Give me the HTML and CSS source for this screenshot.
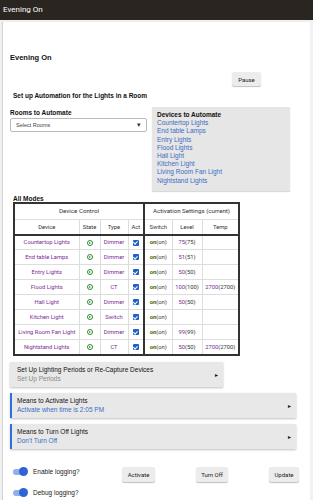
FILE: index.html
```html
<!DOCTYPE html>
<html>
<head>
<meta charset="utf-8">
<title>Evening On</title>
<link rel="stylesheet" href="styles.css">
</head>
<body>
<header class="topbar">Evening On</header>
<div class="page">
  <main class="card">
    <h1 class="title">Evening On</h1>
    <div class="pause-row"><button class="btn">Pause</button></div>
    <h2 class="section">Set up Automation for the Lights in a Room</h2>
    <div class="rooms-row">
      <div class="rooms">
        <div class="label">Rooms to Automate</div>
        <div class="select"><span>Select Rooms</span><span class="caret">&#9662;</span></div>
      </div>
      <div class="devices">
        <div class="label">Devices to Automate</div>
        <div class="dev">Countertop Lights</div>
        <div class="dev">End table Lamps</div>
        <div class="dev">Entry Lights</div>
        <div class="dev">Flood Lights</div>
        <div class="dev">Hall Light</div>
        <div class="dev">Kitchen Light</div>
        <div class="dev">Living Room Fan Light</div>
        <div class="dev">Nightstand Lights</div>
      </div>
    </div>
    <div class="modes-label">All Modes</div>
    <table class="grid">
      <colgroup>
        <col class="c-dev"><col class="c-state"><col class="c-type"><col class="c-act">
        <col class="c-sw"><col class="c-lvl"><col class="c-tmp">
      </colgroup>
      <thead>
        <tr class="h1">
          <th colspan="4" class="sep">Device Control</th>
          <th colspan="3">Activation Settings (current)</th>
        </tr>
        <tr class="h2">
          <th>Device</th><th>State</th><th>Type</th><th class="sep">Act</th>
          <th>Switch</th><th>Level</th><th>Temp</th>
        </tr>
      </thead>
      <tbody>
        <tr><td class="p">Countertop Lights</td><td><span class="st"></span></td><td class="p">Dimmer</td><td class="sep"><span class="cb"></span></td><td><b class="on">on</b>(on)</td><td><span class="p">75</span>(75)</td><td></td></tr>
        <tr><td class="p">End table Lamps</td><td><span class="st"></span></td><td class="p">Dimmer</td><td class="sep"><span class="cb"></span></td><td><b class="on">on</b>(on)</td><td><span class="p">51</span>(51)</td><td></td></tr>
        <tr><td class="p">Entry Lights</td><td><span class="st"></span></td><td class="p">Dimmer</td><td class="sep"><span class="cb"></span></td><td><b class="on">on</b>(on)</td><td><span class="p">50</span>(50)</td><td></td></tr>
        <tr><td class="p">Flood Lights</td><td><span class="st"></span></td><td class="p">CT</td><td class="sep"><span class="cb"></span></td><td><b class="on">on</b>(on)</td><td><span class="p">100</span>(100)</td><td><span class="p">2700</span>(2700)</td></tr>
        <tr><td class="p">Hall Light</td><td><span class="st"></span></td><td class="p">Dimmer</td><td class="sep"><span class="cb"></span></td><td><b class="on">on</b>(on)</td><td><span class="p">50</span>(50)</td><td></td></tr>
        <tr><td class="p">Kitchen Light</td><td><span class="st"></span></td><td class="p">Switch</td><td class="sep"><span class="cb"></span></td><td><b class="on">on</b>(on)</td><td></td><td></td></tr>
        <tr><td class="p">Living Room Fan Light</td><td><span class="st"></span></td><td class="p">Dimmer</td><td class="sep"><span class="cb"></span></td><td><b class="on">on</b>(on)</td><td><span class="p">99</span>(99)</td><td></td></tr>
        <tr><td class="p">Nightstand Lights</td><td><span class="st"></span></td><td class="p">CT</td><td class="sep"><span class="cb"></span></td><td><b class="on">on</b>(on)</td><td><span class="p">50</span>(50)</td><td><span class="p">2700</span>(2700)</td></tr>
      </tbody>
    </table>

    <div class="nav narrow">
      <div class="nav-text"><div class="nav-title">Set Up Lighting Periods or Re-Capture Devices</div><div class="nav-sub gray">Set Up Periods</div></div>
      <span class="arrow">&#9656;</span>
    </div>
    <div class="nav wide blue">
      <div class="nav-text"><div class="nav-title">Means to Activate Lights</div><div class="nav-sub link">Activate when time is 2:05 PM</div></div>
      <span class="arrow">&#9656;</span>
    </div>
    <div class="nav wide blue">
      <div class="nav-text"><div class="nav-title">Means to Turn Off Lights</div><div class="nav-sub link">Don't Turn Off</div></div>
      <span class="arrow">&#9656;</span>
    </div>

    <div class="footer">
      <div class="toggles">
        <div class="tg-row"><span class="toggle"></span><span>Enable logging?</span></div>
        <div class="tg-row"><span class="toggle"></span><span>Debug logging?</span></div>
      </div>
      <div class="btns">
        <button class="btn">Activate</button>
        <button class="btn">Turn Off</button>
        <button class="btn">Update</button>
      </div>
    </div>
  </main>
</div>
</body>
</html>
```

FILE: styles.css
```css
* { box-sizing: border-box; }
html, body { margin: 0; padding: 0; }
body {
  font-family: "Liberation Sans", Arial, sans-serif;
  background: #f2f2f2;
  color: #111;
  width: 313px;
  height: 500px;
  overflow: hidden;
}
.topbar {
  height: 20px;
  background: #2a2521;
  color: #fff;
  font-family: Roboto, sans-serif;
  font-size: 8px;
  line-height: 19px;
  padding-left: 3px;
}
.page {
  padding: 2px 3px 0 3px;
}
.card {
  background: #fff;
  box-shadow: -1px 0 1px rgba(0,0,0,0.12);
  padding: 31px 0 0 7px;
  height: 500px;
}
.title {
  margin: 0;
  font-size: 7.5px;
  line-height: 10px;
  font-weight: bold;
}
.pause-row {
  display: flex;
  padding: 9px 0 0 222px;
}
.btn {
  font-family: Roboto, sans-serif;
  font-size: 6px;
  color: #222;
  background: #ececec;
  border: none;
  border-radius: 2px;
  box-shadow: 0 1px 1px rgba(0,0,0,0.25);
  height: 14px;
  padding: 0 2px;
  margin: 0;
  white-space: nowrap;
}
.pause-row .btn { width: 29px; }
.section {
  margin: 5px 0 0 3px;
  font-size: 6.5px;
  line-height: 10px;
  font-weight: bold;
}
.rooms-row {
  display: flex;
  align-items: flex-start;
  margin-top: 6px;
  gap: 5px;
}
.rooms {
  width: 137px;
  padding-top: 2px;
}
.label {
  font-size: 6.5px;
  font-weight: bold;
  line-height: 8px;
}
.select {
  margin-top: 1px;
  height: 14px;
  border: 1px solid #bbb;
  border-radius: 2px;
  display: flex;
  align-items: center;
  justify-content: space-between;
  padding: 0 5px 0 5px;
  font-size: 5.5px;
  color: #444;
}
.caret { font-size: 7px; color: #333; }
.devices {
  width: 138px;
  background: #e6e6e6;
  padding: 4px 5px 6px 5px;
  box-shadow: 0 1px 1px rgba(0,0,0,0.15);
}
.devices .label { line-height: 8.2px; }
.dev {
  font-size: 6.5px;
  line-height: 8.2px;
  color: #3b6cc4;
}
.modes-label {
  margin: 4px 0 0 3px;
  font-size: 6.5px;
  font-weight: bold;
  line-height: 7px;
}
.grid {
  margin: 0 0 0 3px;
  border-collapse: collapse;
  border: 2px solid #333;
  font-family: Roboto, sans-serif;
  font-size: 5.8px;
  line-height: 7px;
  color: #333;
  table-layout: fixed;
  width: 225px;
}
.c-dev { width: 65px; }
.c-state { width: 21px; }
.c-type { width: 28px; }
.c-act { width: 16px; }
.c-sw { width: 28px; }
.c-lvl { width: 30px; }
.c-tmp { width: 37px; }
.grid th, .grid td {
  border: 1px solid #ddd;
  text-align: center;
  padding: 0;
  font-weight: normal;
  white-space: nowrap;
  overflow: hidden;
}
.grid .h1 th { font-size: 6.2px; }
.grid .sep { border-right: 2px solid #333; }
.grid .h1 th { height: 17px; }
.grid .h2 th { height: 15px; border-bottom: 2px solid #333; }
.grid td { height: 15px; }
.p { color: #7a2a96; }
.on { color: #3a6b00; font-weight: bold; }
.st {
  display: inline-block;
  width: 6px; height: 6px;
  border: 1px solid #2e8b2e;
  border-radius: 50%;
  position: relative;
  vertical-align: middle;
}
.st::after {
  content: "";
  position: absolute;
  left: 1.5px; top: 1px;
  border-left: 2.5px solid #2e8b2e;
  border-top: 1.2px solid transparent;
  border-bottom: 1.2px solid transparent;
}
.cb {
  display: inline-block;
  width: 6px; height: 6px;
  background: #1f5fc8;
  border-radius: 1px;
  position: relative;
  vertical-align: middle;
}
.cb::after {
  content: "";
  position: absolute;
  left: 1.7px; top: 0.6px;
  width: 1.5px; height: 3px;
  border-right: 1px solid #fff;
  border-bottom: 1px solid #fff;
  transform: rotate(45deg);
}
.nav {
  display: flex;
  align-items: center;
  justify-content: space-between;
  background: #e8e8e8;
  box-shadow: 0 1px 2px rgba(0,0,0,0.25);
  height: 25px;
  padding: 0 5px 0 7px;
  margin-top: 6px;
}
.nav.narrow { width: 213px; }
.nav.wide { width: 286px; }
.nav.blue { border-left: 2px solid #2f6fe0; padding-left: 5px; }
.nav-title { font-size: 6.5px; line-height: 9px; color: #111; }
.nav-sub { font-size: 6.5px; line-height: 9px; }
.gray { color: #888; }
.link { color: #3b6cc4; }
.arrow { font-size: 6px; color: #111; }
.footer {
  display: flex;
  align-items: flex-start;
  margin-top: 18px;
}
.toggles {
  width: 112px;
  padding-left: 3px;
}
.tg-row {
  display: flex;
  align-items: center;
  gap: 6px;
  font-size: 6.5px;
  height: 10px;
  margin-bottom: 11px;
  color: #222;
}
.toggle {
  width: 14px; height: 6px;
  border-radius: 3px;
  background: #8eb0ec;
  position: relative;
}
.toggle::after {
  content: "";
  position: absolute;
  right: -1px; top: -1.5px;
  width: 9px; height: 9px;
  border-radius: 50%;
  background: #2f62d6;
}
.btns {
  display: flex;
  gap: 41px;
}
.btns .btn { height: 15px; }
.btns .btn:nth-child(1) { width: 33px; }
.btns .btn:nth-child(2) { width: 32px; }
.btns .btn:nth-child(3) { width: 30px; }
```
